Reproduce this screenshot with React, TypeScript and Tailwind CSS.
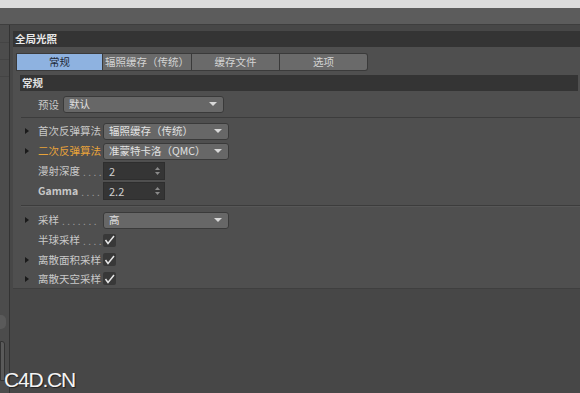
import React from "react";

const font = { fontFamily: '"Noto Sans CJK SC", "Noto Sans", sans-serif' };

function Arrow() {
  return (
    <svg width="8" height="5" viewBox="0 0 8 5" className="shrink-0">
      <path d="M0 0 L8 0 L4 4 Z" fill="#d8d8d8" />
    </svg>
  );
}

function Tri() {
  return (
    <svg width="4" height="6" viewBox="0 0 4 6" className="shrink-0">
      <path d="M0 0 L4 3 L0 6 Z" fill="#1a1a1a" />
    </svg>
  );
}

function Dropdown({ w, text }: { w: string; text: string }) {
  return (
    <div
      className={`${w} h-[17px] rounded-[3px] bg-[#676767] border border-[#3a3a3a] flex items-center justify-between pl-[5px] pr-[6px] text-[#e2e2e2] text-[10.5px]`}
    >
      <span className="leading-none whitespace-nowrap">{text}</span>
      <Arrow />
    </div>
  );
}

function Spin({ text }: { text: string }) {
  return (
    <div className="w-[62px] h-[18px] bg-[#353535] border border-[#2e2e2e] flex items-center justify-between pl-[5px] pr-[4px] text-[#d0d0d0] text-[11px]">
      <span className="leading-none">{text}</span>
      <svg width="5" height="8" viewBox="0 0 5 8">
        <path d="M0 3 L2.5 0 L5 3 Z" fill="#8a8a8a" />
        <path d="M0 5 L2.5 8 L5 5 Z" fill="#8a8a8a" />
      </svg>
    </div>
  );
}

function Check() {
  return (
    <div className="w-[13px] h-[13px] bg-[#383838] rounded-[2px] flex items-center justify-center shrink-0">
      <svg width="11" height="10" viewBox="0 0 11 10">
        <path d="M1.5 5 L4 8.5 L10 1" stroke="#e6e6e6" strokeWidth="1.5" fill="none" />
      </svg>
    </div>
  );
}

function Row({
  tri,
  label,
  labelClass = "text-[#c8c8c8]",
  dots,
  children,
  h = "h-[20px]",
}: {
  tri?: boolean;
  label: string;
  labelClass?: string;
  dots?: string;
  children: React.ReactNode;
  h?: string;
}) {
  return (
    <div className={`flex items-center ${h}`}>
      <div className="w-[17px] flex justify-start pl-[4px]">{tri ? <Tri /> : null}</div>
      <div className={`w-[65px] flex items-center text-[10.5px] whitespace-nowrap ${labelClass}`}>
        <span className="shrink-0">{label}</span>
        {dots ? (
          <span className="ml-[3px] text-[#9a9a9a] text-[10px] tracking-[2.5px] font-normal">{dots}</span>
        ) : null}
      </div>
      {children}
    </div>
  );
}

export default function App() {
  return (
    <div className="w-[580px] h-[393px] bg-[#474747] flex flex-col overflow-hidden relative" style={font}>
      <div className="h-[8px] bg-[#dcdcdc]" />
      <div className="h-[17px] bg-[#5c5c5c] border-b border-[#3e3e3e]" />
      <div className="flex flex-1">
        <div className="w-[10px] bg-[#4c4c4c] border-r border-[#333333] flex flex-col">
          <div className="h-[18px] border-b border-[#444]" />
          <div className="h-[17px] border-b border-[#444]" />
          <div className="h-[17px] border-b border-[#444]" />
          <div className="flex-1" />
          <div className="h-[14px] w-[6px] rounded-r-[5px] bg-[#5a5a5a] mb-[12px]" />
          <div className="h-[40px] w-[5px] rounded-tr-[3px] bg-[#5a5a5a] border border-[#333] mb-[12px]" />
        </div>
        <div className="flex-1 flex flex-col">
          <div className="h-[6px]" />
          <div className="ml-[3px] bg-[#4f4f4f] h-[258px] border-b border-[#3f3f3f] flex flex-col">
            <div className="h-[16px] bg-[#343434] flex items-center pl-[2px] text-[#e8e8e8] text-[10.5px] font-bold">
              全局光照
            </div>
            <div className="flex mt-[6px] ml-[3px] h-[19px]">
              <div className="w-[87px] bg-[#8eb2e0] border border-[#3a3a3a] flex items-center justify-center text-[10.5px] text-[#1e2a3a]">
                常规
              </div>
              <div className="w-[89px] bg-[#6a6a6a] border border-l-0 border-[#3a3a3a] flex items-center justify-center text-[10.5px] text-[#d4d4d4] whitespace-nowrap">
                辐照缓存（传统）
              </div>
              <div className="w-[88px] bg-[#6a6a6a] border border-l-0 border-[#3a3a3a] flex items-center justify-center text-[10.5px] text-[#d4d4d4]">
                缓存文件
              </div>
              <div className="w-[88px] bg-[#6a6a6a] border border-l-0 border-[#3a3a3a] rounded-r-[3px] flex items-center justify-center text-[10.5px] text-[#d4d4d4]">
                选项
              </div>
            </div>
            <div className="mt-[4px] ml-[7px] mr-[2px] h-[16px] bg-[#343434] flex items-center pl-[2px] text-[#e0e0e0] text-[10.5px] font-bold">
              常规
            </div>
            <div className="ml-[8px] flex flex-col">
              <div className="flex items-center h-[21px] mt-[3px]">
                <div className="w-[17px]" />
                <div className="w-[25px] text-[10.5px] text-[#c8c8c8]">预设</div>
                <Dropdown w="w-[161px]" text="默认" />
              </div>
              <div className="h-[1px] bg-[#3c3c3c] mt-[2px] mb-[3px]" />
              <Row tri label="首次反弹算法">
                <Dropdown w="w-[126px]" text="辐照缓存（传统）" />
              </Row>
              <Row tri label="二次反弹算法" labelClass="text-[#e8a33a]">
                <Dropdown w="w-[126px]" text="准蒙特卡洛（QMC）" />
              </Row>
              <Row label="漫射深度" dots="....">
                <Spin text="2" />
              </Row>
              <Row label="Gamma" labelClass="text-[#c8c8c8] font-bold" dots="....">
                <Spin text="2.2" />
              </Row>
              <div className="h-[1px] bg-[#3c3c3c] mt-[4px]" />
              <div className="h-[1px] bg-[#575757] mb-[3px]" />
              <Row tri label="采样" dots=".......">
                <Dropdown w="w-[126px]" text="高" />
              </Row>
              <Row label="半球采样" dots="....">
                <Check />
              </Row>
              <Row tri label="离散面积采样" h="h-[19px]">
                <Check />
              </Row>
              <Row tri label="离散天空采样" h="h-[19px]">
                <Check />
              </Row>
            </div>
          </div>
        </div>
      </div>
      <div
        className="absolute left-[4px] top-[364px] text-[21px] text-[#f4f4f4] tracking-[-1.2px]"
        style={{ fontFamily: '"Liberation Sans", sans-serif', textShadow: "1px 1px 1px #222" }}
      >
        C4D.CN
      </div>
    </div>
  );
}
